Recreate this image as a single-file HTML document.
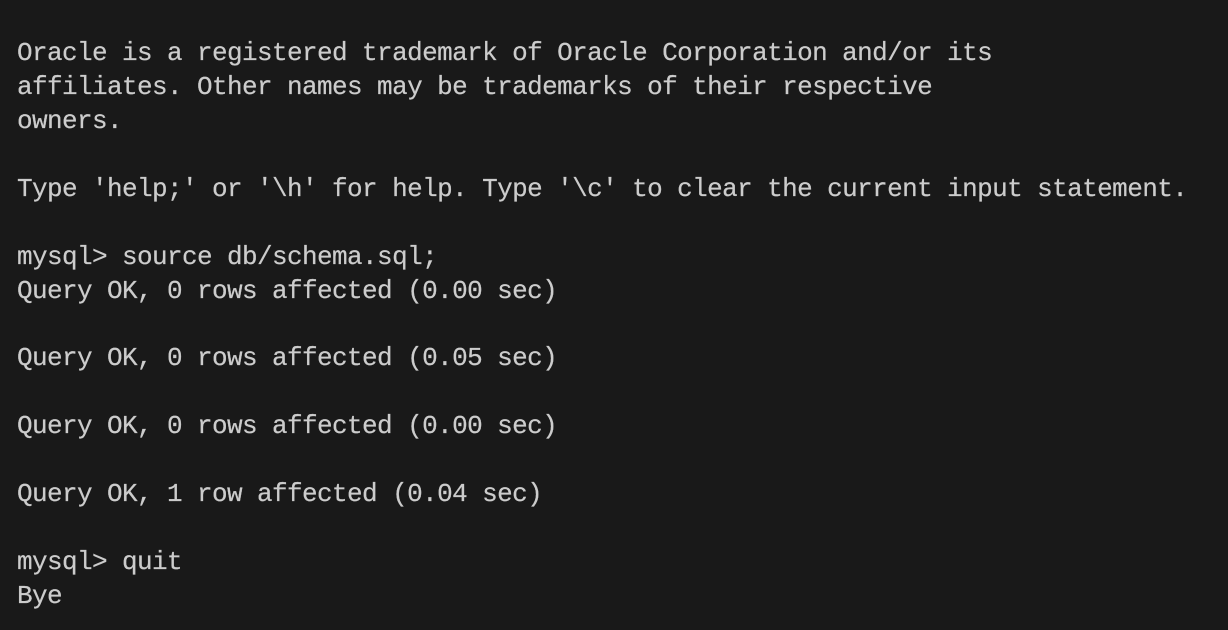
<!DOCTYPE html>
<html><head><style>
html,body{margin:0;padding:0;background:#191919;width:1228px;height:630px;overflow:hidden}
pre{margin:0;padding:37px 0 0 17px;font-family:"Liberation Mono",monospace;font-size:26px;letter-spacing:-0.6px;line-height:33.93px;color:#cccccc;white-space:pre;-webkit-text-stroke:0.2px #cccccc}
</style></head><body><pre>Oracle is a registered trademark of Oracle Corporation and/or its
affiliates. Other names may be trademarks of their respective
owners.

Type 'help;' or '\h' for help. Type '\c' to clear the current input statement.

mysql&gt; source db/schema.sql;
Query OK, 0 rows affected (0.00 sec)

Query OK, 0 rows affected (0.05 sec)

Query OK, 0 rows affected (0.00 sec)

Query OK, 1 row affected (0.04 sec)

mysql&gt; quit
Bye</pre></body></html>
